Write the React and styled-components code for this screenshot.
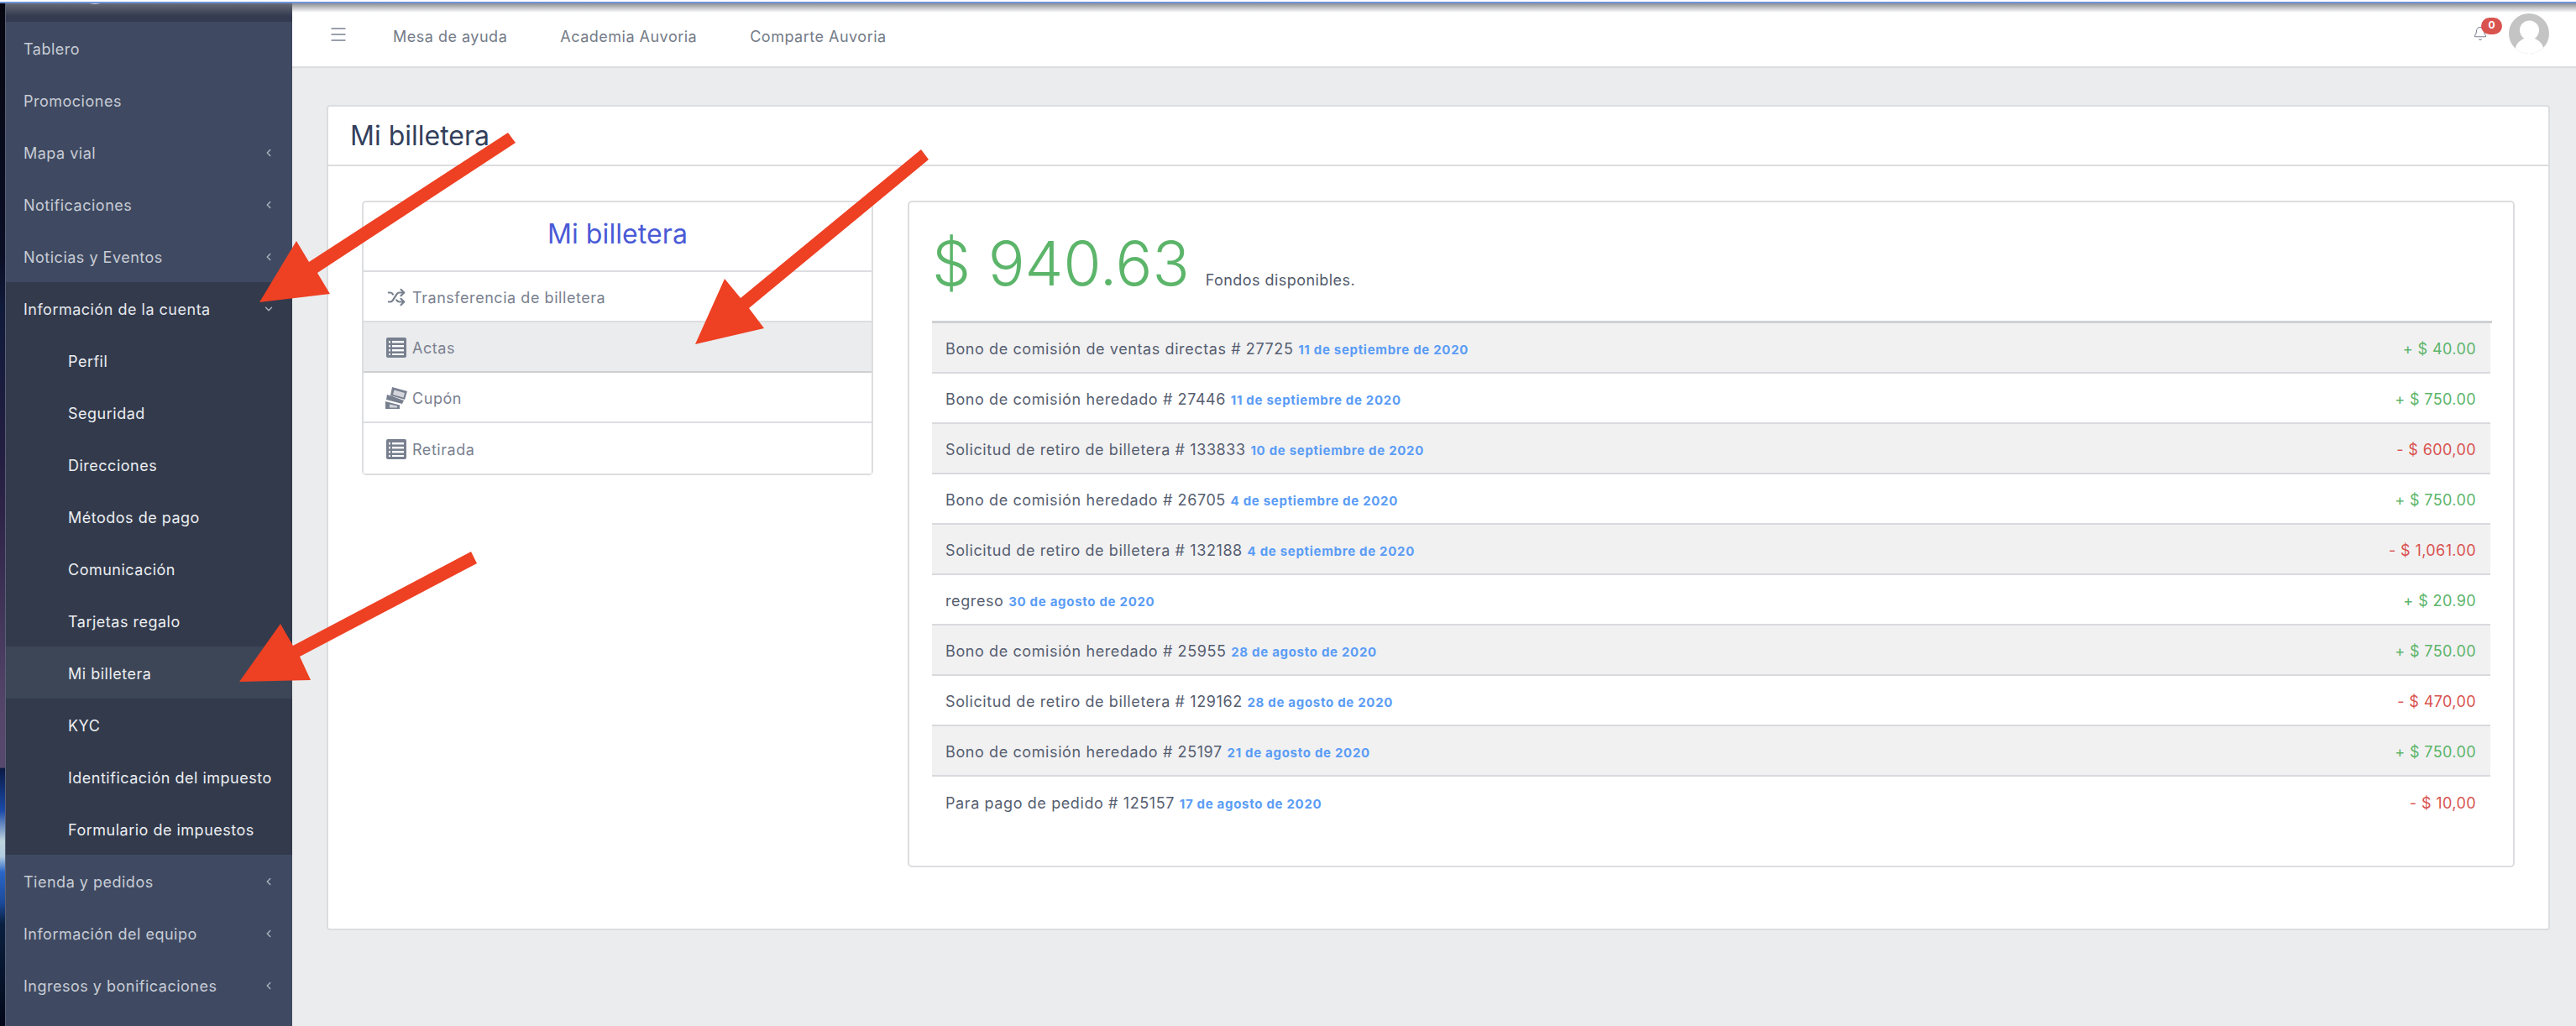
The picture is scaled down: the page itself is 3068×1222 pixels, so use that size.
import React from "react";
import styled, { createGlobalStyle } from "styled-components";
import { Shuffle, ChevronLeft, ChevronDown, Bell, Menu } from "lucide-react";

const GlobalStyle = createGlobalStyle`
  html, body {
    margin: 0;
    padding: 0;
    height: 1222px;
    overflow: hidden;
    background: #ebecee;
    font-family: Inter, "Liberation Sans", sans-serif;
  }
`;

const sideTop = [
  { label: "Tablero" },
  { label: "Promociones" },
  { label: "Mapa vial", arrow: true },
  { label: "Notificaciones", arrow: true },
  { label: "Noticias y Eventos", arrow: true },
];
const subItems = ["Perfil", "Seguridad", "Direcciones", "Métodos de pago", "Comunicación", "Tarjetas regalo", "Mi billetera", "KYC", "Identificación del impuesto", "Formulario de impuestos"];
const sideBottom = ["Tienda y pedidos", "Información del equipo", "Ingresos y bonificaciones"];

const rows = [
  { text: "Bono de comisión de ventas directas # 27725", date: "11 de septiembre de 2020", amount: "+ $ 40.00", plus: true },
  { text: "Bono de comisión heredado # 27446", date: "11 de septiembre de 2020", amount: "+ $ 750.00", plus: true },
  { text: "Solicitud de retiro de billetera # 133833", date: "10 de septiembre de 2020", amount: "- $ 600,00" },
  { text: "Bono de comisión heredado # 26705", date: "4 de septiembre de 2020", amount: "+ $ 750.00", plus: true },
  { text: "Solicitud de retiro de billetera # 132188", date: "4 de septiembre de 2020", amount: "- $ 1,061.00" },
  { text: "regreso", date: "30 de agosto de 2020", amount: "+ $ 20.90", plus: true },
  { text: "Bono de comisión heredado # 25955", date: "28 de agosto de 2020", amount: "+ $ 750.00", plus: true },
  { text: "Solicitud de retiro de billetera # 129162", date: "28 de agosto de 2020", amount: "- $ 470,00" },
  { text: "Bono de comisión heredado # 25197", date: "21 de agosto de 2020", amount: "+ $ 750.00", plus: true },
  { text: "Para pago de pedido # 125157", date: "17 de agosto de 2020", amount: "- $ 10,00" },
];

const ListIcon = () => (
  <svg width="24" height="24" viewBox="0 0 24 24">
    <rect x="0" y="0" width="24" height="24" rx="2" fill="#78808f" />
    <g fill="#fff">
      <rect x="7" y="4" width="14" height="2.4" />
      <rect x="7" y="9" width="14" height="2.4" />
      <rect x="7" y="14" width="14" height="2.4" />
      <rect x="7" y="19" width="14" height="2" />
      <rect x="3" y="4" width="2" height="2.4" />
      <rect x="3" y="9" width="2" height="2.4" />
      <rect x="3" y="14" width="2" height="2.4" />
      <rect x="3" y="19" width="2" height="2" />
    </g>
  </svg>
);

const CouponIcon = () => (
  <svg width="26" height="26" viewBox="0 0 26 26">
    <path d="M8 0L26 5 23 15 6 10z" fill="#78808f" />
    <path d="M10.500 3.500L23 7 21.500 12.500 9 9z" fill="#d4d6db" />
    <path d="M2 9L7 10.500 22 16 20 20 1 15z" fill="#78808f" />
    <path d="M0 17L17 21.500V26H0z" fill="#78808f" />
    <path d="M5 20.500L14 22.500V24.500H5z" fill="#d4d6db" />
  </svg>
);

const App = () => {
  return (
    <Page>
      <GlobalStyle />
      <Strip />
      <Sidebar>
        <SideHead />
        {sideTop.map((it) => (
          <SideLink key={it.label}>
            {it.label}
            {it.arrow && <ChevronLeft size={14} strokeWidth={2.5} />}
          </SideLink>
        ))}
        <SubGroup>
          <SideLink $open>
            Información de la cuenta
            <ChevronDown size={14} strokeWidth={2.5} />
          </SideLink>
          {subItems.map((s) => (
            <SubLink key={s} $active={s === "Mi billetera"}>{s}</SubLink>
          ))}
        </SubGroup>
        {sideBottom.map((s) => (
          <SideLink key={s}>
            {s}
            <ChevronLeft size={14} strokeWidth={2.5} />
          </SideLink>
        ))}
      </Sidebar>

      <Main>
        <TopBar>
          <Burger><Menu size={24} strokeWidth={1.3} /></Burger>
          <TopLink>Mesa de ayuda</TopLink>
          <TopLink>Academia Auvoria</TopLink>
          <TopLink>Comparte Auvoria</TopLink>
          <TopRight>
            <BellWrap>
              <Bell size={18} strokeWidth={1.4} />
              <Badge>0</Badge>
            </BellWrap>
            <Avatar>
              <svg width="48" height="48" viewBox="0 0 48 48">
                <defs>
                  <clipPath id="avatarClip"><circle cx="24" cy="24" r="24" /></clipPath>
                </defs>
                <circle cx="24" cy="24" r="24" fill="#c4c4c4" />
                <g clipPath="url(#avatarClip)">
                  <circle cx="24.500" cy="20" r="11.500" fill="#fff" />
                  <ellipse cx="24.500" cy="44" rx="17" ry="15" fill="#fff" />
                </g>
              </svg>
            </Avatar>
          </TopRight>
        </TopBar>

        <Content>
          <Card>
            <CardHead>Mi billetera</CardHead>
            <CardBody>
              <WalletMenu>
                <MenuTitle>Mi billetera</MenuTitle>
                <MenuRow>
                  <MenuIcon><Shuffle size={22} strokeWidth={2.4} /></MenuIcon>
                  Transferencia de billetera
                </MenuRow>
                <MenuRow $active>
                  <MenuIcon><ListIcon /></MenuIcon>
                  Actas
                </MenuRow>
                <MenuRow>
                  <MenuIcon><CouponIcon /></MenuIcon>
                  Cupón
                </MenuRow>
                <MenuRow>
                  <MenuIcon><ListIcon /></MenuIcon>
                  Retirada
                </MenuRow>
              </WalletMenu>

              <Ledger>
                <Balance>
                  <BalanceAmount>$ 940.63</BalanceAmount>
                  <BalanceNote>Fondos disponibles.</BalanceNote>
                </Balance>
                <Table>
                  {rows.map((r, i) => (
                    <Row key={r.text + r.date} $odd={i % 2 === 0} $last={i === rows.length - 1}>
                      <RowText>
                        {r.text} <RowDate>{r.date}</RowDate>
                      </RowText>
                      <Amount $plus={r.plus}>{r.amount}</Amount>
                    </Row>
                  ))}
                </Table>
              </Ledger>
            </CardBody>
          </Card>
        </Content>
      </Main>

      {/* flechas rojas encima de la captura */}
      <Arrows width="3068" height="1222" viewBox="0 0 3068 1222">
        <polygon fill="#ee4023" points="605,158 614,170 378,325 393,350 309,360 353,287 368,312" />
        <polygon fill="#ee4023" points="1097,178 1106,190 892,367 910,391 828,410 863,332 882,355" />
        <polygon fill="#ee4023" points="561,657 568,671 357,782 370,810 285,812 334,743 349,769" />
      </Arrows>
    </Page>
  );
};

export default App;

const Page = styled.div`
  position: relative;
  display: flex;
  width: 3068px;
  height: 1222px;
  overflow: hidden;
  background: #ebecee;
  &::before {
    content: "";
    position: absolute;
    top: 2px;
    left: 0;
    right: 0;
    height: 2px;
    background: #6f93dc;
    box-shadow: 0 -2px 0 #fff;
    z-index: 5;
  }
`;

const Strip = styled.div`
  flex: 0 0 6px;
  background: linear-gradient(
    #05060f 0%,
    #0a0e25 25%,
    #101a3a 30%,
    #241f42 45%,
    #2e2448 50%,
    #56466c 70%,
    #57486e 74.8%,
    #0a1a44 74.9%,
    #1a4aa8 79%,
    #c0d4dc 82%,
    #b0cbe0 83.5%,
    #2a66c8 85%,
    #1b4a9a 88%,
    #0a2040 90%,
    #030818 100%
  );
`;

const Sidebar = styled.aside`
  flex: 0 0 342px;
  box-sizing: border-box;
  display: flex;
  flex-direction: column;
  background: #3f4a62;
  border-left: 1px solid #5a6176;
`;

const SideHead = styled.div`
  position: relative;
  height: 26px;
  flex: 0 0 26px;
  background: linear-gradient(#666a75 4px, #343b50 19px);
  &::after {
    content: "";
    position: absolute;
    top: 4px;
    left: 100px;
    width: 12px;
    height: 1px;
    border-radius: 50%;
    background: #c8cad0;
  }
`;

const SideLink = styled.div`
  display: flex;
  align-items: center;
  justify-content: space-between;
  height: 62px;
  flex: 0 0 62px;
  box-sizing: border-box;
  padding: 2px 21px 0 21px;
  font-size: 18px;
  letter-spacing: 0.5px;
  color: ${(p) => (p.$open ? "#e6e8ec" : "#c8ccd5")};
  svg {
    color: #aab0bd;
  }
`;

const SubGroup = styled.div`
  display: flex;
  flex-direction: column;
  background: #323a4c;
`;

const SubLink = styled.div`
  display: flex;
  align-items: center;
  height: 62px;
  box-sizing: border-box;
  padding: 2px 0 0 74px;
  font-size: 18px;
  letter-spacing: 0.5px;
  white-space: nowrap;
  color: #eceef1;
  background: ${(p) => (p.$active ? "#3d4657" : "transparent")};
`;

const Main = styled.div`
  flex: 1;
  display: flex;
  flex-direction: column;
  min-width: 0;
`;

const TopBar = styled.header`
  display: flex;
  align-items: center;
  height: 81px;
  box-sizing: border-box;
  padding: 7px 32px 0 43px;
  background: linear-gradient(#8d8f94 4px, #fff 15px);
  border-bottom: 2px solid #dcdde0;
`;

const Burger = styled.div`
  display: flex;
  color: #7a8190;
  margin-right: 53px;
  margin-top: -5px;
`;

const TopLink = styled.div`
  font-size: 18px;
  letter-spacing: 0.5px;
  color: #747b88;
  margin-right: 63px;
`;

const TopRight = styled.div`
  margin-left: auto;
  margin-top: -6px;
  display: flex;
  align-items: center;
`;

const BellWrap = styled.div`
  position: relative;
  display: flex;
  color: #7a8190;
  margin-right: 25px;
`;

const Badge = styled.span`
  position: absolute;
  top: -10px;
  left: 10px;
  width: 25px;
  height: 20px;
  border-radius: 10px;
  background: #d9534f;
  color: #fff;
  font-size: 12px;
  font-weight: 700;
  line-height: 18px;
  text-align: center;
`;

const Avatar = styled.div`
  display: flex;
  width: 48px;
  height: 48px;
`;

const Content = styled.main`
  padding: 44px 31px 0 41px;
`;

const Card = styled.section`
  height: 983px;
  box-sizing: border-box;
  background: #fff;
  border: 2px solid #dcdde0;
  border-radius: 4px;
`;

const CardHead = styled.h1`
  margin: 0;
  height: 71px;
  box-sizing: border-box;
  padding: 0 0 0 26px;
  display: flex;
  align-items: center;
  font-size: 32px;
  font-weight: 400;
  color: #333f5c;
  border-bottom: 2px solid #dcdde0;
`;

const CardBody = styled.div`
  display: flex;
  align-items: flex-start;
  padding: 41px 0 0 40px;
  gap: 41px;
`;

const WalletMenu = styled.nav`
  flex: 0 0 609px;
  box-sizing: border-box;
  border: 2px solid #dcdde0;
  border-radius: 5px;
`;

const MenuTitle = styled.div`
  height: 83px;
  display: flex;
  align-items: center;
  justify-content: center;
  padding-bottom: 6px;
  box-sizing: border-box;
  font-size: 32px;
  letter-spacing: 0.1px;
  color: #4a5ad6;
  border-bottom: 2px solid #dcdde0;
`;

const MenuRow = styled.div`
  display: flex;
  align-items: center;
  height: 60px;
  box-sizing: border-box;
  padding: 2px 0 0 25px;
  font-size: 18px;
  letter-spacing: 0.55px;
  color: #7a8190;
  background: ${(p) => (p.$active ? "#ebecee" : "#fff")};
  border-bottom: 2px solid ${(p) => (p.$active ? "#cfd0d4" : "#dcdde0")};
  &:last-child {
    border-bottom: 0;
  }
`;

const MenuIcon = styled.span`
  display: flex;
  justify-content: center;
  align-items: center;
  width: 28px;
  margin-right: 5px;
  color: #78808f;
`;

const Ledger = styled.div`
  flex: 0 0 1914px;
  height: 794px;
  box-sizing: border-box;
  border: 2px solid #dcdde0;
  border-radius: 5px;
  padding: 0 25px 0 27px;
`;

const Balance = styled.div`
  display: flex;
  align-items: baseline;
  height: 141px;
  padding-top: 28px;
  box-sizing: border-box;
`;

const BalanceAmount = styled.span`
  font-size: 73px;
  font-weight: 300;
  color: #5cb56a;
`;

const BalanceNote = styled.span`
  font-size: 18px;
  letter-spacing: 0.45px;
  color: #525a6c;
  margin-left: 19px;
`;

const Table = styled.div`
  border-top: 3px solid #cfd0d4;
`;

const Row = styled.div`
  display: flex;
  align-items: center;
  justify-content: space-between;
  height: 60px;
  box-sizing: border-box;
  margin-right: 2px;
  padding: 3px 17px 0 16px;
  background: ${(p) => (p.$odd ? "#f1f1f2" : "#fff")};
  border-bottom: ${(p) => (p.$last ? "0" : "2px solid #d9dade")};
`;

const RowText = styled.div`
  font-size: 18px;
  letter-spacing: 0.6px;
  color: #565e70;
  white-space: nowrap;
`;

const RowDate = styled.span`
  font-size: 15px;
  font-weight: 700;
  letter-spacing: 0.7px;
  color: #5a9cf5;
`;

const Amount = styled.div`
  font-size: 18px;
  letter-spacing: 0.4px;
  color: ${(p) => (p.$plus ? "#5cb56a" : "#d9534f")};
`;

const Arrows = styled.svg`
  position: absolute;
  inset: 0;
  z-index: 6;
  pointer-events: none;
`;
